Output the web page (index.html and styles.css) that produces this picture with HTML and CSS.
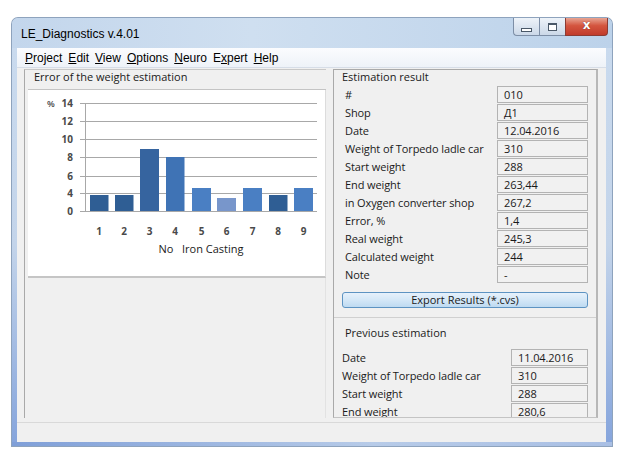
FILE: index.html
```html
<!DOCTYPE html>
<html>
<head>
<meta charset="utf-8">
<link rel="stylesheet" href="styles.css">
</head>
<body>
<div class="page">
  <div class="window">
    <div class="titlebar">
      <span class="title">LE_Diagnostics v.4.01</span>
      <div class="ctrls">
        <div class="cbtn cmin"><span class="min-ico"></span></div>
        <div class="cbtn cmax"><span class="max-ico"></span></div>
        <div class="cbtn cclose">x</div>
      </div>
    </div>
    <div class="frame">
      <div class="content">
        <div class="menubar">
          <span><u>P</u>roject</span>
          <span><u>E</u>dit</span>
          <span><u>V</u>iew</span>
          <span><u>O</u>ptions</span>
          <span><u>N</u>euro</span>
          <span>E<u>x</u>pert</span>
          <span><u>H</u>elp</span>
        </div>
        <div class="client">
          <div class="left-panel">
            <div class="gb-title">Error of the weight estimation</div>
            <div class="chart">
              <svg width="297" height="185" viewBox="0 0 297 185">
                <g class="grid">
                  <line x1="52" y1="13.5" x2="289" y2="13.5"/>
                  <line x1="52" y1="31.5" x2="289" y2="31.5"/>
                  <line x1="52" y1="49.5" x2="289" y2="49.5"/>
                  <line x1="52" y1="67.5" x2="289" y2="67.5"/>
                  <line x1="52" y1="86.5" x2="289" y2="86.5"/>
                  <line x1="52" y1="103.5" x2="289" y2="103.5"/>
                  <line x1="52" y1="121.5" x2="289" y2="121.5"/>
                  <line x1="57.5" y1="13" x2="57.5" y2="122"/>
                </g>
                <g class="ylab">
                  <text x="19" y="17" class="pct">%</text>
                  <text x="45" y="17">14</text>
                  <text x="45" y="35">12</text>
                  <text x="45" y="53">10</text>
                  <text x="45" y="71">8</text>
                  <text x="45" y="90">6</text>
                  <text x="45" y="107">4</text>
                  <text x="45" y="125">0</text>
                </g>
                <rect x="62" y="105" width="18.5" height="16" fill="#2f5e94"/>
                <rect x="87" y="105" width="18.5" height="16" fill="#2f5e94"/>
                <rect x="112" y="59" width="19" height="62" fill="#36649f"/>
                <rect x="138" y="67" width="18.5" height="54" fill="#3f73b5"/>
                <rect x="164" y="98" width="19" height="23" fill="#4a7fc3"/>
                <rect x="189" y="108" width="19" height="13" fill="#7896cb"/>
                <rect x="215" y="98" width="19" height="23" fill="#4a7fc3"/>
                <rect x="241" y="105" width="18.5" height="16" fill="#2f5e94"/>
                <rect x="266" y="98" width="19" height="23" fill="#4a7fc3"/>
                <g class="xlab">
                  <text x="71" y="145">1</text>
                  <text x="96" y="145">2</text>
                  <text x="121.5" y="145">3</text>
                  <text x="147" y="145">4</text>
                  <text x="173.5" y="145">5</text>
                  <text x="198.5" y="145">6</text>
                  <text x="224.5" y="145">7</text>
                  <text x="250" y="145">8</text>
                  <text x="275.5" y="145">9</text>
                </g>
                <text class="xtitle" x="173" y="163">No&#160;&#160; Iron Casting</text>
              </svg>
            </div>
            <div class="left-rest"></div>
          </div>
          <div class="right-panel">
            <div class="gb-title rp-title">Estimation result</div>
            <div class="rows">
              <div class="row"><span class="lbl">#</span><span class="val">010</span></div>
              <div class="row"><span class="lbl">Shop</span><span class="val">Д1</span></div>
              <div class="row"><span class="lbl">Date</span><span class="val">12.04.2016</span></div>
              <div class="row"><span class="lbl">Weight of Torpedo ladle car</span><span class="val">310</span></div>
              <div class="row"><span class="lbl">Start weight</span><span class="val">288</span></div>
              <div class="row"><span class="lbl">End weight</span><span class="val">263,44</span></div>
              <div class="row"><span class="lbl">in Oxygen converter shop</span><span class="val">267,2</span></div>
              <div class="row"><span class="lbl">Error, %</span><span class="val">1,4</span></div>
              <div class="row"><span class="lbl">Real weight</span><span class="val">245,3</span></div>
              <div class="row"><span class="lbl">Calculated weight</span><span class="val">244</span></div>
              <div class="row"><span class="lbl">Note</span><span class="val">-</span></div>
            </div>
            <div class="btn-wrap"><div class="export-btn">Export Results (*.cvs)</div></div>
            <div class="prev">
              <div class="prev-title"><span>Previous estimation</span></div>
              <div class="prev-rows">
                <div class="row prow"><span class="lbl">Date</span><span class="val pval">11.04.2016</span></div>
                <div class="row prow"><span class="lbl">Weight of Torpedo ladle car</span><span class="val pval">310</span></div>
                <div class="row prow"><span class="lbl">Start weight</span><span class="val pval">288</span></div>
                <div class="row prow"><span class="lbl">End weight</span><span class="val pval">280,6</span></div>
              </div>
            </div>
          </div>
        </div>
        <div class="statusbar"></div>
      </div>
    </div>
    <div class="bottom-frame"></div>
  </div>
</div>
</body>
</html>
```

FILE: styles.css
```css
html, body {
  margin: 0;
  padding: 0;
  background: #ffffff;
}
.page {
  width: 638px;
  height: 452px;
  padding: 18px 0 0 12px;
  box-sizing: border-box;
  overflow: hidden;
}
.window {
  width: 600px;
  height: 428px;
  display: flex;
  flex-direction: column;
  background: #c9daee;
  border-radius: 6px 6px 0 0;
  box-shadow: 0 0 0 1px #8ea3bd;
  font-family: "Liberation Sans", Arial, sans-serif;
}
.titlebar {
  height: 30px;
  display: flex;
  align-items: flex-start;
  background: linear-gradient(90deg, #c3d6ec 0%, #cfdff0 40%, #bcd2ea 100%);
  border-radius: 6px 6px 0 0;
  flex: none;
}
.title {
  font-size: 12px;
  color: #000;
  margin: 9px 0 0 9px;
}
.ctrls {
  margin-left: auto;
  margin-right: 4px;
  display: flex;
  height: 18px;
}
.cbtn {
  height: 18px;
  box-sizing: border-box;
  display: flex;
  align-items: center;
  justify-content: center;
  border: 1px solid #7d8ea6;
  border-top: none;
}
.cmin {
  width: 26px;
  border-radius: 0 0 0 4px;
  background: linear-gradient(#eef3f9, #cbd8e8);
  border-right: none;
}
.cmax {
  width: 26px;
  background: linear-gradient(#eef3f9, #cbd8e8);
  border-right: none;
}
.cclose {
  width: 43px;
  border-radius: 0 0 4px 0;
  background: linear-gradient(#e8a593 0%, #d4553f 45%, #c13b2b 100%);
  border-color: #8c3b33;
  color: #fff;
  font-family: "DejaVu Sans", sans-serif;
  font-weight: bold;
  font-size: 12px;
  line-height: 1;
  padding-bottom: 3px;
  text-shadow: 0 0 1px #5a1a14;
}
.min-ico {
  width: 9px;
  height: 2px;
  background: #fff;
  border: 1px solid #4a5868;
  margin-top: 6px;
}
.max-ico {
  width: 7px;
  height: 5px;
  border: 1px solid #4a5868;
  border-top-width: 2px;
  background: #fff;
}
.frame {
  flex: 1;
  display: flex;
  padding: 0 6px 0 5px;
  background: linear-gradient(#c9daee 0%, #c3d4ea 50%, #86a5dc 100%);
}
.content {
  flex: 1;
  display: flex;
  flex-direction: column;
  background: #f0f0f0;
}
.menubar {
  height: 20px;
  display: flex;
  align-items: center;
  gap: 6px;
  padding-left: 8px;
  font-size: 12px;
  color: #000;
  background: linear-gradient(#fbfcfe, #eef2f8);
  border-bottom: 1px solid #d6dde7;
  box-sizing: border-box;
  flex: none;
}
.menubar u {
  text-decoration: underline;
  text-underline-offset: 1px;
}
.client {
  height: 354px;
  display: flex;
  padding: 1px 8px 4px 7px;
  gap: 7px;
  box-sizing: border-box;
  flex: none;
}
.left-panel {
  width: 302px;
  display: flex;
  flex-direction: column;
  border-left: 1px solid #a9a9a9;
  border-top: 1px solid #c8c8c8;
  padding-left: 3px;
  box-sizing: border-box;
}
.gb-title {
  height: 20px;
  font-family: "Open Sans", sans-serif;
  font-size: 11px;
  color: #1a1a1a;
  padding-left: 6px;
  line-height: 14px;
  box-sizing: border-box;
  border-bottom: 1px solid #c4c4c4;
}
.chart {
  height: 186px;
  background: #ffffff;
  border-bottom: 2px solid #c5c5c5;
  border-right: 1px solid #dcdcdc;
}
.chart svg {
  display: block;
}
.grid line {
  stroke: #a8a8a8;
  stroke-width: 1;
}
.ylab text {
  font-family: "Open Sans", sans-serif;
  font-weight: 700;
  font-size: 10px;
  fill: #4a4a4a;
  text-anchor: end;
}
.ylab text.pct {
  text-anchor: start;
  font-weight: 600;
  font-size: 9px;
}
.xlab text {
  font-family: "Open Sans", sans-serif;
  font-weight: 700;
  font-size: 10px;
  fill: #4a4a4a;
  text-anchor: middle;
}
.xtitle {
  font-family: "Open Sans", sans-serif;
  font-size: 11px;
  fill: #1a1a1a;
  text-anchor: middle;
}
.left-rest {
  flex: 1;
  border-right: 1px solid #e2e2e2;
}
.right-panel {
  width: 265px;
  display: flex;
  flex-direction: column;
  border-left: 1px solid #a9a9a9;
  border-top: 1px solid #a9a9a9;
  border-right: 2px solid #b7b7b7;
  border-bottom: 1px solid #c4c4c4;
  box-sizing: border-box;
  font-family: "Open Sans", sans-serif;
  font-size: 11px;
  color: #1a1a1a;
}
.rp-title {
  border-bottom: none;
  padding-left: 8px;
  height: 15px;
}
.rows {
  display: flex;
  flex-direction: column;
  padding: 0 8px 0 11px;
}
.row {
  height: 18px;
  display: flex;
  align-items: center;
  justify-content: space-between;
}
.lbl {
  white-space: nowrap;
  letter-spacing: -0.1px;
}
.val {
  width: 91px;
  height: 17px;
  box-sizing: border-box;
  border: 1px solid #b3b3b3;
  background: #f1f1f1;
  padding-left: 6px;
  line-height: 15px;
  letter-spacing: -0.1px;
}
.btn-wrap {
  padding: 9px 8px 0 8px;
}
.export-btn {
  height: 16px;
  box-sizing: border-box;
  border: 1px solid #5d93c2;
  border-radius: 3px;
  background: linear-gradient(#e6f1fb 0%, #d4e7f7 50%, #bedaf1 100%);
  text-align: center;
  line-height: 14px;
  font-size: 11px;
  color: #1a1a1a;
}
.prev {
  margin-top: 9px;
  border-top: 1px solid #d0d0d0;
  flex: 1;
  overflow: hidden;
}
.prev-title {
  height: 30px;
  padding: 7px 0 0 11px;
  box-sizing: border-box;
  display: flex;
}
.prev-rows {
  padding: 0 8px 0 8px;
  display: flex;
  flex-direction: column;
}
.pval {
  width: 77px;
  padding-left: 6px;
}
.statusbar {
  flex: 1;
  background: #f0f0f0;
  border-top: 1px solid #d9d9d9;
}
.bottom-frame {
  height: 4px;
  background: linear-gradient(90deg, #7f9fd8, #b7cbe8 60%, #a9bfe4);
  flex: none;
}
```
